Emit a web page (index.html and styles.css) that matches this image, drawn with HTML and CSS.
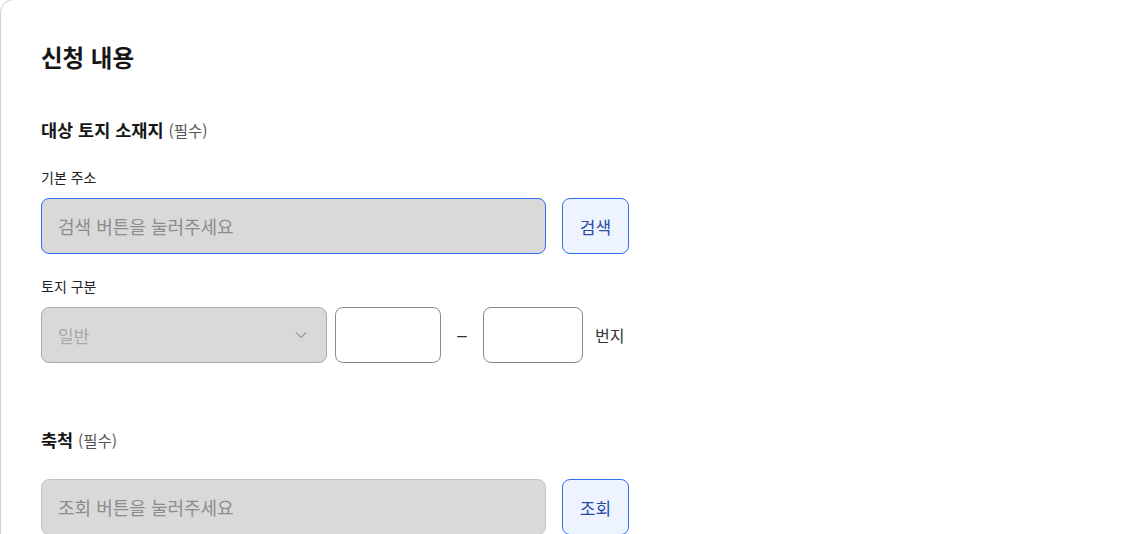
FILE: index.html
```html
<!DOCTYPE html>
<html lang="ko">
<head>
<meta charset="utf-8">
<link rel="stylesheet" href="styles.css">
</head>
<body>
<div class="card">
  <h2 class="title">신청 내용</h2>

  <section class="group">
    <h3 class="group-title">대상 토지 소재지 <span class="req">(필수)</span></h3>
    <div class="field">
      <label class="label">기본 주소</label>
      <div class="row">
        <div class="input input-wide input-active">검색 버튼을 눌러주세요</div>
        <button class="btn">검색</button>
      </div>
    </div>
    <div class="field">
      <label class="label">토지 구분</label>
      <div class="row">
        <div class="input select">
          <span>일반</span>
          <svg class="chev" width="12" height="8" viewBox="0 0 12 8"><path d="M1 1.5 L6 6.5 L11 1.5" fill="none" stroke="#9a9a9a" stroke-width="1.2"/></svg>
        </div>
        <div class="input num num1"></div>
        <span class="dash">–</span>
        <div class="input num num2"></div>
        <span class="unit">번지</span>
      </div>
    </div>
  </section>

  <section class="group group2">
    <h3 class="group-title">축척 <span class="req">(필수)</span></h3>
    <div class="row row-scale">
      <div class="input input-wide input-disabled">조회 버튼을 눌러주세요</div>
      <button class="btn">조회</button>
    </div>
  </section>
</div>
</body>
</html>
```

FILE: styles.css
```css
* { box-sizing: border-box; }
html, body { margin: 0; padding: 0; background: #fff; }
body {
  font-family: "Noto Sans CJK KR", "Noto Sans", sans-serif;
  color: #1a1a1a;
  overflow: hidden;
  height: 534px;
}
.card {
  width: 100%;
  height: 535px;
  border: 1px solid #d4d4d4;
  border-right: none;
  border-bottom: none;
  border-radius: 14px 0 0 0;
  padding: 40px 40px 0 40px;
  margin-top: -1px;
  overflow: hidden;
}
.title {
  margin: 0;
  font-size: 23.5px;
  font-weight: 700;
  line-height: 34px;
  color: #161616;
}
.group { margin-top: 44px; }
.group2 { margin-top: 65px; }
.group-title {
  margin: 0;
  font-size: 17.5px;
  font-weight: 700;
  line-height: 24px;
  color: #161616;
}
.req {
  font-size: 15.5px;
  font-weight: 400;
  color: #555;
}
.field { margin-top: 25px; }
.field + .field { margin-top: 22px; }
.label {
  display: block;
  font-size: 14px;
  line-height: 20px;
  color: #222;
  margin-bottom: 11px;
}
.row {
  display: flex;
  align-items: center;
}
.input {
  height: 56px;
  border-radius: 8px;
  display: flex;
  align-items: center;
  font-size: 17px;
}
.input-wide {
  width: 505px;
  background: #d9d9d9;
  padding-left: 16px;
  color: #8c8c8c;
  font-size: 18px;
}
.input-active { border: 1px solid #2e6ff0; }
.input-disabled { border: 1px solid #c4c4c4; }
.btn {
  margin-left: 16px;
  width: 67px;
  height: 56px;
  border: 1px solid #2e6ff0;
  border-radius: 8px;
  background: #eef4ff;
  color: #2b4aa6;
  font-family: inherit;
  font-size: 17px;
  padding: 0;
}
.select {
  width: 286px;
  background: #d9d9d9;
  border: 1px solid #acacac;
  padding: 0 19px 0 16px;
  justify-content: space-between;
  color: #a6a6a6;
}
.chev { display: block; }
.num {
  background: #fff;
  border: 1px solid #8a8a8a;
}
.num1 { width: 106px; margin-left: 8px; }
.num2 { width: 100px; }
.dash {
  width: 42px;
  text-align: center;
  font-family: "Liberation Sans", sans-serif;
  font-size: 17px;
  line-height: 1;
  color: #333;
}
.unit {
  margin-left: 12px;
  font-size: 16px;
  color: #333;
}
.row-scale { margin-top: 27px; }
```
